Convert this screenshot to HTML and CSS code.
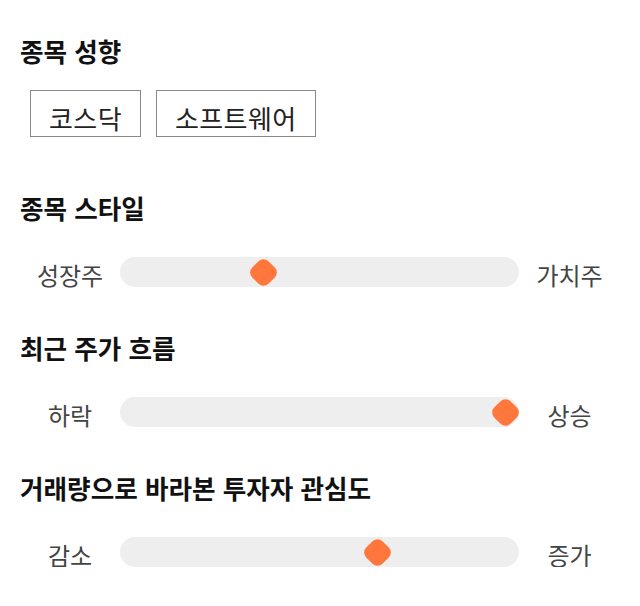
FILE: index.html
```html
<!DOCTYPE html>
<html lang="ko">
<head>
<meta charset="utf-8">
<link rel="stylesheet" href="styles.css">
</head>
<body>
<div class="page">
  <h2 class="title first">종목 성향</h2>
  <div class="tags">
    <span class="tag">코스닥</span>
    <span class="tag">소프트웨어</span>
  </div>

  <h2 class="title t2">종목 스타일</h2>
  <div class="slider-row">
    <span class="lab">성장주</span>
    <div class="track"><span class="thumb" style="--v:0.35"></span></div>
    <span class="lab">가치주</span>
  </div>

  <h2 class="title t3">최근 주가 흐름</h2>
  <div class="slider-row">
    <span class="lab">하락</span>
    <div class="track"><span class="thumb" style="--v:1"></span></div>
    <span class="lab">상승</span>
  </div>

  <h2 class="title t3">거래량으로 바라본 투자자 관심도</h2>
  <div class="slider-row">
    <span class="lab">감소</span>
    <div class="track"><span class="thumb" style="--v:0.655"></span></div>
    <span class="lab">증가</span>
  </div>
</div>
</body>
</html>
```

FILE: styles.css
```css
html, body {
  margin: 0;
  padding: 0;
  background: #fff;
}
body {
  font-family: "Noto Sans CJK KR", "Noto Sans", sans-serif;
  color: #111;
}
.page {
  width: 640px;
  padding-top: 34px;
}
.title {
  margin: 0;
  padding-left: 20px;
  font-size: 25.6px;
  line-height: 34px;
  font-weight: 700;
  color: #111;
}
.title.t2 { margin-top: 54px; }
.title.t3 { margin-top: 44px; }
.tags {
  display: flex;
  gap: 15px;
  margin-top: 22px;
  padding-left: 30px;
}
.tag {
  height: 37px;
  border: 1px solid #888;
  padding: 8px 18px 0 18px;
  font-size: 26px;
  line-height: 37px;
  color: #222;
  display: flex;
  align-items: center;
  letter-spacing: 0.4px;
}
.slider-row {
  display: flex;
  align-items: center;
  margin-top: 32px;
  padding-left: 20px;
  height: 30px;
}
.lab {
  width: 100px;
  text-align: center;
  font-size: 24px;
  line-height: 30px;
  color: #444;
  padding-top: 6px;
}
.slider-row .lab:last-child { width: 101px; }
.track {
  position: relative;
  width: 399px;
  height: 30px;
  border-radius: 15px;
  background: #eeeeee;
}
.thumb {
  position: absolute;
  top: 50%;
  left: calc(14px + var(--v) * (100% - 28px));
  width: 23px;
  height: 23px;
  margin: -11.5px 0 0 -11.5px;
  background: #ff773d;
  border-radius: 7px;
  transform: rotate(45deg);
}
```
